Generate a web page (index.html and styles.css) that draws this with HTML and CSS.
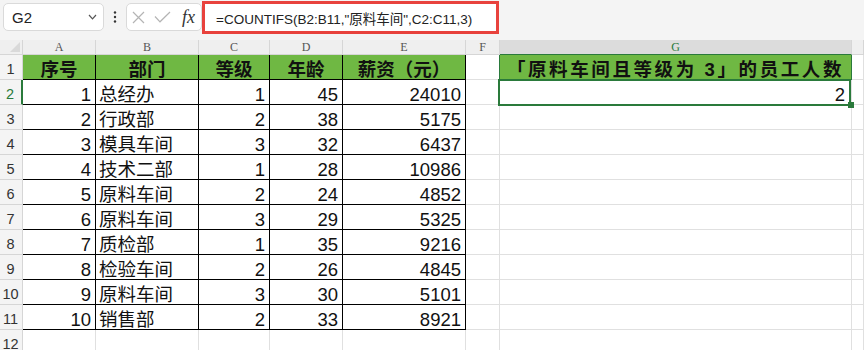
FILE: index.html
```html
<!DOCTYPE html>
<html lang="zh-CN">
<head>
    <meta charset="UTF-8">
    <title>COUNTIFS 示例</title>
    <link rel="stylesheet" href="styles.css">
</head>
<body>

    <div class="toolbar">
        <div class="namebox">
            <span>G2</span>
            <svg width="9" height="6" viewBox="0 0 9 6"><path d="M1 1 L4.5 4.8 L8 1" fill="none" stroke="#555" stroke-width="1.2"/></svg>
        </div>
        <div class="dots">
            <svg width="4" height="12" viewBox="0 0 4 12"><circle cx="2" cy="1.5" r="1.2" fill="#333"/><circle cx="2" cy="6" r="1.2" fill="#333"/><circle cx="2" cy="10.5" r="1.2" fill="#333"/></svg>
        </div>
        <div class="fxbox">
            <svg width="13" height="13" viewBox="0 0 13 13"><path d="M1 1 L12 12 M12 1 L1 12" stroke="#b4b4b4" stroke-width="1.2"/></svg>
            <svg width="17" height="12" viewBox="0 0 17 12"><path d="M1 5.5 L6 10.8 L16 1" fill="none" stroke="#b4b4b4" stroke-width="1.2"/></svg>
            <span class="fx">fx</span>
        </div>
        <div class="formula">=COUNTIFS(B2:B11,"原料车间",C2:C11,3)</div>
    </div>

    <div class="sheet">
        <!-- 列标 -->
        <div class="corner"></div><div class="ch">A</div><div class="ch">B</div><div class="ch">C</div><div class="ch">D</div><div class="ch">E</div><div class="ch">F</div><div class="ch active">G</div><div class="ch"></div>

        <div class="rh">1</div><div class="h">序号</div><div class="h">部门</div><div class="h">等级</div><div class="h">年龄</div><div class="h">薪资（元）</div><div class="f1"></div><div class="g1">「原料车间且等级为 3」的员工人数</div><div></div>

        <div class="rh active">2</div><div class="d n">1</div><div class="d t">总经办</div><div class="d n">1</div><div class="d n">45</div><div class="d n">24010</div><div></div><div class="n g2">2<span class="selbox"><span class="handle"></span></span></div><div></div>
        <div class="rh">3</div><div class="d n">2</div><div class="d t">行政部</div><div class="d n">2</div><div class="d n">38</div><div class="d n">5175</div><div></div><div></div><div></div>
        <div class="rh">4</div><div class="d n">3</div><div class="d t">模具车间</div><div class="d n">3</div><div class="d n">32</div><div class="d n">6437</div><div></div><div></div><div></div>
        <div class="rh">5</div><div class="d n">4</div><div class="d t">技术二部</div><div class="d n">1</div><div class="d n">28</div><div class="d n">10986</div><div></div><div></div><div></div>
        <div class="rh">6</div><div class="d n">5</div><div class="d t">原料车间</div><div class="d n">2</div><div class="d n">24</div><div class="d n">4852</div><div></div><div></div><div></div>
        <div class="rh">7</div><div class="d n">6</div><div class="d t">原料车间</div><div class="d n">3</div><div class="d n">29</div><div class="d n">5325</div><div></div><div></div><div></div>
        <div class="rh">8</div><div class="d n">7</div><div class="d t">质检部</div><div class="d n">1</div><div class="d n">35</div><div class="d n">9216</div><div></div><div></div><div></div>
        <div class="rh">9</div><div class="d n">8</div><div class="d t">检验车间</div><div class="d n">2</div><div class="d n">26</div><div class="d n">4845</div><div></div><div></div><div></div>
        <div class="rh">10</div><div class="d n">9</div><div class="d t">原料车间</div><div class="d n">3</div><div class="d n">30</div><div class="d n">5101</div><div></div><div></div><div></div>
        <div class="rh">11</div><div class="d n">10</div><div class="d t">销售部</div><div class="d n">2</div><div class="d n">33</div><div class="d n">8921</div><div></div><div></div><div></div>
        <div class="rh">12</div><div></div><div></div><div></div><div></div><div></div><div></div><div></div><div></div>
    </div>

</body>
</html>
```

FILE: styles.css
```css
body {
    margin: 0;
    padding: 0;
    background-color: #fff;
    font-family: "Liberation Sans", "Noto Sans CJK SC", sans-serif;
    color: #111;
}

/* 上方编辑栏 */
.toolbar {
    height: 40px;
    box-sizing: border-box;
    padding-top: 3px;
    background-color: #f4f4f4;
    display: flex;
    align-items: flex-start;
}

.namebox {
    margin-left: 3px;
    width: 101px;
    height: 28px;
    box-sizing: border-box;
    border: 1px solid #dadada;
    border-radius: 5px;
    background-color: #fff;
    display: flex;
    align-items: center;
    justify-content: space-between;
    padding: 0 6px 0 8px;
    font-size: 15px;
    color: #222;
}

.dots {
    width: 22px;
    height: 28px;
    display: flex;
    align-items: center;
    justify-content: center;
}

.fxbox {
    width: 76px;
    height: 28px;
    box-sizing: border-box;
    border: 1px solid #dadada;
    border-radius: 5px;
    background-color: #fff;
    display: flex;
    align-items: center;
    gap: 9px;
    padding-left: 5px;
}

.fx {
    font-family: "Liberation Serif", serif;
    font-style: italic;
    font-size: 18px;
    color: #333;
    margin-left: 2px;
}

.formula {
    margin-top: -2px;
    width: 297px;
    height: 33px;
    box-sizing: border-box;
    border: 3px solid #e8423d;
    background-color: #fff;
    padding-left: 11px;
    display: flex;
    align-items: center;
    font-size: 13.5px;
    color: #222;
    white-space: nowrap;
}

/* 表格区域 */
.sheet {
    display: grid;
    grid-template-columns: 23px 73px 103px 71px 73px 123px 34px 352px 1fr;
    grid-template-rows: 15px repeat(12, 25px);
    font-size: 18.5px;
    line-height: 18px;
}

.sheet > div {
    box-sizing: border-box;
    border-right: 1px solid #e0e0e0;
    border-bottom: 1px solid #e0e0e0;
    display: flex;
    align-items: flex-end;
    white-space: nowrap;
    overflow: hidden;
}

.sheet > .corner {
    background-color: #efefef;
    border-color: #d6d6d6;
    justify-content: flex-end;
    padding: 0 2px 2px 0;
}

.corner::after {
    content: "";
    border-left: 10px solid transparent;
    border-bottom: 10px solid #d9d9d9;
}

.sheet > .ch {
    background-color: #efefef;
    border-color: #d6d6d6;
    justify-content: center;
    align-items: center;
    font-family: "Liberation Serif", serif;
    font-size: 12px;
    line-height: 14px;
    color: #555;
}

.sheet > .ch.active {
    background-color: #dcdcdc;
    color: #2a7a3b;
    border-bottom: 1px solid #2a7a3b;
}

.sheet > .rh {
    background-color: #f4f4f4;
    border-color: #d6d6d6;
    justify-content: center;
    align-items: center;
    font-size: 14.5px;
    line-height: 16px;
    padding: 3px 1px 0 0;
    color: #333;
}

.sheet > .rh.active {
    color: #2a7a3b;
    border-right: 2px solid #2a7a3b;
}

.sheet > .h {
    background-color: #6fb843;
    border-color: #000;
    justify-content: center;
    font-weight: bold;
}

.sheet > .d {
    border-color: #000;
}

.n {
    justify-content: flex-end;
    padding-right: 4px;
}

.t {
    padding-left: 3px;
}

.sheet > .f1 {
    border-right-color: #2a7a3b;
}

.sheet > .g1 {
    background-color: #6fb843;
    border-right-color: #2a7a3b;
    border-bottom-color: #2a7a3b;
    justify-content: center;
    font-weight: bold;
    letter-spacing: 2.6px;
}

.sheet > .g2 {
    position: relative;
    overflow: visible;
    padding-right: 6px;
}

/* 选中框 */
.selbox {
    position: absolute;
    left: -2px;
    top: -1px;
    right: 0;
    bottom: -2px;
    border: 2px solid #2a7a3b;
    z-index: 2;
}

.handle {
    position: absolute;
    right: -5px;
    bottom: -4px;
    width: 6px;
    height: 6px;
    background-color: #2a7a3b;
}
```
